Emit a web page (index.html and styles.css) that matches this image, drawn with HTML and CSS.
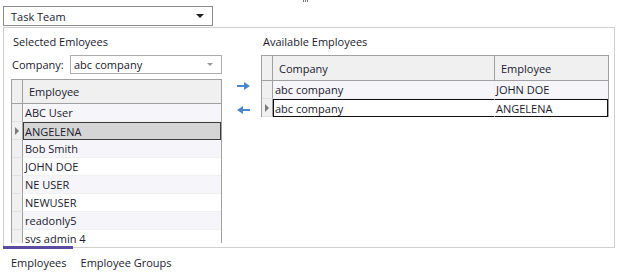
FILE: index.html
```html
<!DOCTYPE html>
<html lang="en">
<head>
  <meta charset="UTF-8">
  <title>Task Team</title>
  <link rel="stylesheet" href="styles.css">
</head>
<body>
  <div class="grip"><i></i><i></i><i></i></div>

  <div class="team-select">
    <span>Task Team</span>
    <span class="caret"></span>
  </div>

  <div class="panel">
    <div class="left">
      <div class="title">Selected Emloyees</div>
      <div class="company-row">
        <label>Company:</label>
        <div class="combo">
          <span>abc company</span>
          <span class="caret light"></span>
        </div>
      </div>
      <div class="grid left-grid">
        <div class="row head">
          <div class="rh"></div>
          <div class="cell">Employee</div>
        </div>
        <div class="row alt"><div class="rh"></div><div class="cell">ABC User</div></div>
        <div class="row current"><div class="rh"><span class="tri"></span></div><div class="cell sel">ANGELENA</div></div>
        <div class="row alt"><div class="rh"></div><div class="cell">Bob Smith</div></div>
        <div class="row"><div class="rh"></div><div class="cell">JOHN DOE</div></div>
        <div class="row alt"><div class="rh"></div><div class="cell">NE USER</div></div>
        <div class="row"><div class="rh"></div><div class="cell">NEWUSER</div></div>
        <div class="row alt"><div class="rh"></div><div class="cell">readonly5</div></div>
        <div class="row"><div class="rh"></div><div class="cell">sys admin 4</div></div>
      </div>
    </div>

    <div class="arrows">
      <svg width="13" height="8" viewBox="0 0 13 8"><path d="M0 3H8V5H0Z M7 0L13 4L7 8Z" fill="#4a86c8"/></svg>
      <svg width="13" height="8" viewBox="0 0 13 8"><path d="M13 3H5V5H13Z M6 0L0 4L6 8Z" fill="#4a86c8"/></svg>
    </div>

    <div class="right">
      <div class="title">Available Employees</div>
      <div class="grid right-grid">
        <div class="row head">
          <div class="rh"></div>
          <div class="cell c1">Company</div>
          <div class="cell c2">Employee</div>
        </div>
        <div class="row alt">
          <div class="rh"></div>
          <div class="cell c1">abc company</div>
          <div class="cell c2">JOHN DOE</div>
        </div>
        <div class="row current">
          <div class="rh"><span class="tri"></span></div>
          <div class="cell c1 boxed">abc company</div>
          <div class="cell c2 boxed">ANGELENA</div>
        </div>
      </div>
    </div>
  </div>

  <div class="tabs">
    <div class="tab active">Employees</div>
    <div class="tab">Employee Groups</div>
  </div>
</body>
</html>
```

FILE: styles.css
```css
body {
  margin: 0;
  background: white;
  font-family: 'Open Sans', sans-serif;
  font-size: 11px;
  color: #1a1a2e;
  width: 623px;
  height: 274px;
  overflow: hidden;
}
.grip {
  display: flex;
  gap: 1px;
  height: 3px;
  padding-left: 303px;
  align-items: flex-start;
}
.grip i {
  width: 1px;
  height: 2px;
  background: #777;
}
.team-select {
  display: flex;
  align-items: center;
  justify-content: space-between;
  box-sizing: border-box;
  width: 210px;
  height: 20px;
  margin: 3px 0 0 3px;
  padding: 0 8px 0 7px;
  border: 1px solid #8c8c8c;
}
.caret {
  width: 0;
  height: 0;
  border-left: 4px solid transparent;
  border-right: 4px solid transparent;
  border-top: 4px solid #222;
}
.caret.light {
  border-top-color: #999;
  border-left-width: 3px;
  border-right-width: 3px;
  border-top-width: 3px;
}
.panel {
  display: flex;
  box-sizing: border-box;
  width: 612px;
  height: 220px;
  margin: 1px 0 0 3px;
  border: 1px solid #cfcfcf;
  border-bottom: none;
}
.left {
  width: 211px;
  padding-left: 7px;
}
.title {
  height: 18px;
  padding: 6px 0 0 2px;
}
.company-row {
  display: flex;
  align-items: center;
  height: 19px;
  margin-top: 3px;
}
.company-row label {
  width: 62px;
  padding-left: 1px;
}
.combo {
  display: flex;
  align-items: center;
  justify-content: space-between;
  box-sizing: border-box;
  flex: none;
  width: 152px;
  height: 19px;
  padding: 0 8px 0 3px;
  border: 1px solid #acacac;
}
.grid {
  box-sizing: border-box;
  border: 1px solid #a0a0a0;
  overflow: hidden;
}
.left-grid {
  height: 164px;
  margin-top: 5px;
  border-bottom: none;
}
.row {
  display: flex;
  height: 18px;
}
.row.head {
  height: 23px;
  background: #f0f0f0;
  border-bottom: 1px solid #a0a0a0;
}
.rh {
  display: flex;
  align-items: center;
  box-sizing: border-box;
  width: 11px;
  flex: none;
  background: #f0f0f0;
  border-right: 1px solid #a0a0a0;
  border-bottom: 1px solid #e2e2e2;
}
.head .rh {
  border-bottom: none;
}
.cell {
  flex: 1;
  display: flex;
  align-items: center;
  box-sizing: border-box;
  padding-left: 2px;
  border-bottom: 1px solid #f0f0f0;
  white-space: nowrap;
}
.head .cell {
  padding-left: 6px;
  border-bottom: none;
}
.row.alt .cell {
  background: #f5f5fa;
}
.cell.sel {
  background: #d5d5d5;
  border: 1px solid #3c3c3c;
  padding-left: 1px;
}
.tri {
  width: 0;
  height: 0;
  margin-left: 3px;
  border-top: 4px solid transparent;
  border-bottom: 4px solid transparent;
  border-left: 4px solid #7a7a7a;
}
.arrows {
  display: flex;
  flex-direction: column;
  align-items: center;
  gap: 16px;
  box-sizing: border-box;
  width: 39px;
  padding: 54px 0 0 3px;
}
.right {
  width: 348px;
}
.right-grid {
  margin-top: 3px;
  border-bottom: none;
}
.right-grid .row.head {
  height: 24px;
}
.c1 {
  flex: none;
  width: 222px;
  border-right: 1px solid #a0a0a0;
}
.row .c2 {
  flex: 1;
  padding-left: 1px;
}
.head .c2 {
  padding-left: 6px;
}
.row:not(.head) .c1 {
  border-right: 1px solid #f0f0f0;
}
.cell.boxed {
  border-top: 1px solid #111;
  border-bottom: 1px solid #111;
}
.cell.c1.boxed {
  border-left: 1px solid #111;
  padding-left: 1px;
  border-right: 1px solid #fff;
}
.cell.c2.boxed {
  border-right: 1px solid #111;
}
.tabs {
  display: flex;
  margin-left: 3px;
  width: 612px;
  height: 26px;
  border-top: 1px solid #cfcfcf;
}
.tab {
  padding: 7px 6px 0 8px;
}
.tab.active {
  margin-top: -2px;
  padding-top: 6px;
  border-top: 3px solid #5a4c9e;
}
```
